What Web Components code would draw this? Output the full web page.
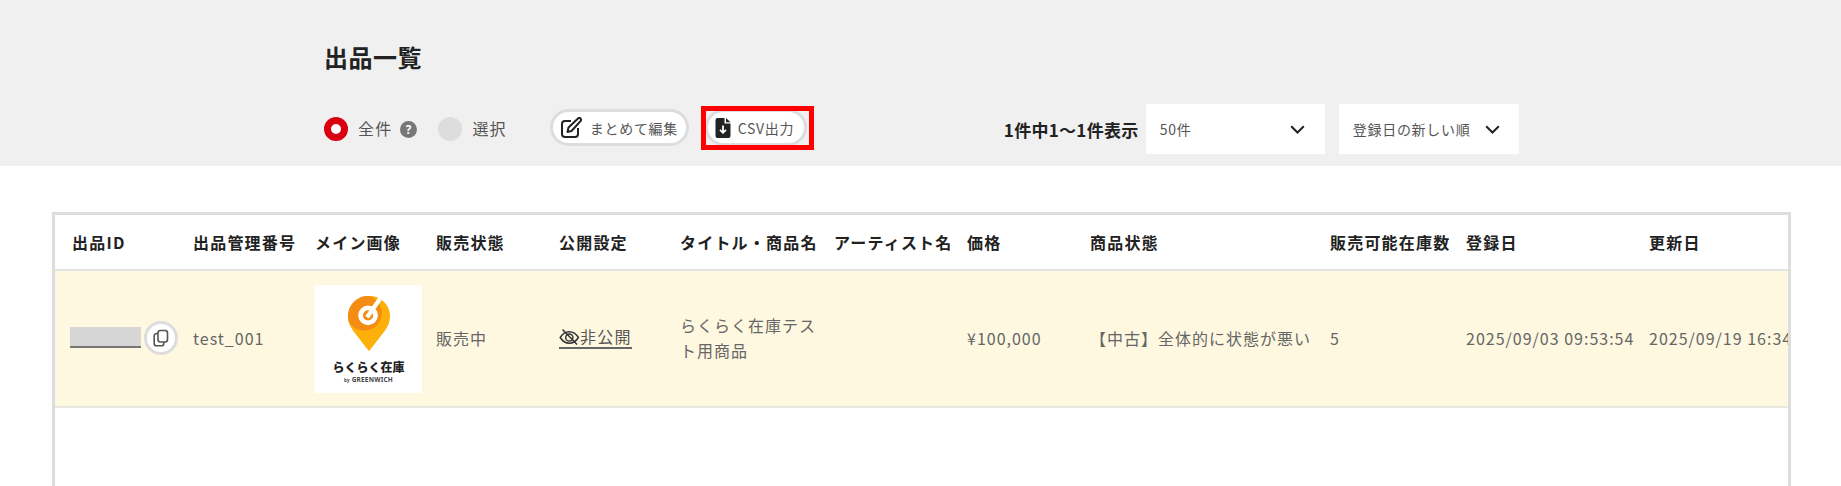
<!DOCTYPE html>
<html lang="ja"><head><meta charset="utf-8"><title>出品一覧</title>
<style>
html,body{margin:0;padding:0;height:486px;overflow:hidden;background:#fff;font-family:"Noto Sans CJK JP","Noto Sans",sans-serif;color:#555}
</style></head><body>
<list-page></list-page>
<script>
const def=(name,css,html)=>{customElements.define(name,class extends HTMLElement{constructor(){super();this.attachShadow({mode:'open'}).innerHTML=`<style>${css}</style>${html}`}})};

def('radio-opt',`:host{display:inline-flex;align-items:center;gap:10px;font-size:16px;letter-spacing:1.2px;color:#555}
 i{display:block;box-sizing:border-box;width:24px;height:24px;border-radius:50%;background:#ddd}
 span{padding-bottom:2px}
 :host([on]) i{background:#fff;border:7px solid #d9000f}`,`<i></i><span><slot></slot></span>`);

def('pill-btn',`:host{display:inline-flex;align-items:center;box-sizing:border-box;height:37px;border:3px solid #ddd;border-radius:19px;background:#fff;font-size:14px;letter-spacing:.7px;color:#555;padding:0 8px;white-space:nowrap;margin-top:-3px}
 ::slotted(svg){display:block;flex:none}`,`<slot name="icon"></slot><slot></slot>`);

def('select-box',`:host{display:flex;align-items:center;justify-content:space-between;box-sizing:border-box;height:50px;width:179px;background:#fff;padding:0 20px 0 14px;font-size:14px;letter-spacing:.7px;color:#555;white-space:nowrap}
 svg{display:block;flex:none}`,`<slot></slot><svg width="15" height="9" viewBox="0 0 15 9" fill="none" stroke="#222" stroke-width="2"><path d="M1.200 1.200 7.500 7.500 13.800 1.200"/></svg>`);

def('data-row',`:host{display:grid;grid-template-columns:121px 122px 121px 123px 121px 154px 133px 123px 240px 136px 183px 200px;box-sizing:border-box;align-items:center;white-space:nowrap;padding-left:17px}
 :host([head]){height:56px;border-bottom:2px solid #e4e4e4;color:#222;font-weight:700;font-size:16px;letter-spacing:1.2px;background:#fff}
 :host([body]){height:137px;padding-bottom:2px;border-bottom:2px solid #e8e8e0;background:#fef8e0;color:#666;font-size:16px;letter-spacing:1px}`,`<slot></slot>`);

def('cell-box',`:host{display:block;min-width:0}`,`<slot></slot>`);

def('copy-id',`:host{display:flex;align-items:center;gap:3px;margin-left:-2px}
 .id{display:block;box-sizing:border-box;width:71px;height:21px;background:#d6d6d6;border-bottom:2px solid #777}
 .b{display:flex;align-items:center;justify-content:center;box-sizing:border-box;width:34px;height:34px;border:3px solid #ddd;border-radius:50%;background:#fff}`,
`<span class="id"></span><span class="b"><svg width="18" height="18" viewBox="0 0 18 18" fill="none" stroke="#555" stroke-width="1.600"><rect x="6" y="1.500" width="9.500" height="11.500" rx="2.400"/><path d="M6 4.500H4.600A2.400 2.400 0 0 0 2.200 7v7.400a2.400 2.400 0 0 0 2.400 2.400h4.800a2.400 2.400 0 0 0 2.400-2.400V13"/></svg></span>`);

def('brand-logo',`:host{display:flex;flex-direction:column;align-items:center;box-sizing:border-box;width:107px;height:108px;background:#fff;padding-top:10px;letter-spacing:0}
 svg{display:block}
 .n{font:900 12px/14px "Noto Sans CJK JP",sans-serif;color:#222;margin-top:8px;letter-spacing:0}
 .s{font:700 6.500px/8px "Noto Sans",sans-serif;color:#444;letter-spacing:.2px;margin-top:2px}
 small{font-size:4.500px}`,
`<svg width="42" height="57" viewBox="0 0 44 58"><defs><clipPath id="p"><path d="M22 0C9.800 0 0 9.600 0 21.600 0 29 3.400 34 8 40l14 18 14-18c4.600-6 8-11 8-18.400C44 9.600 34.200 0 22 0z"/></clipPath></defs>
<g clip-path="url(#p)"><rect width="44" height="58" fill="#fdb00a"/><circle cx="17" cy="18" r="18.500" fill="#f58c14"/>
<circle cx="21" cy="20.500" r="7.800" fill="none" stroke="#fff" stroke-width="5"/><path d="M20 22.500 35 1" stroke="#fff" stroke-width="4.500" fill="none"/></g></svg>
<span class="n">らくらく在庫</span><span class="s"><small>by</small> GREENWICH</span>`);

def('private-link',`:host{display:inline-flex;align-items:center;color:#555;border-bottom:2px solid #666;line-height:21px;letter-spacing:1.200px}
 svg{display:block;flex:none}`,
`<svg width="21" height="18" viewBox="0 0 21 18" fill="none" stroke="#333" stroke-width="1.500"><path d="M1.200 9.500C3.500 5.800 6.700 3.800 10.300 3.800s6.800 2 9.100 5.700c-2.300 3.700-5.500 5.700-9.100 5.700S3.500 13.200 1.200 9.500z"/><circle cx="10.300" cy="9.500" r="3.600"/><path d="M3.500 1.500 18 16.500"/></svg><slot></slot>`);

def('list-page',`:host{display:block;position:relative;height:486px;overflow:hidden}
 .band{box-sizing:border-box;height:166px;background:#f0f0f0;padding:39px 0 0 324px}
 h1{margin:0;font-size:24px;line-height:36px;font-weight:700;color:#222;letter-spacing:.5px}
 .bar{display:flex;align-items:center;height:50px;margin-top:29px}
 .help{display:block;margin-left:8px;margin-right:21px}
 .count{font-size:17px;font-weight:700;color:#222;white-space:nowrap;width:134px;letter-spacing:.3px;margin-left:197px}
 .tbl{box-sizing:border-box;margin:46px 50px 0 52px;height:300px;border:3px solid #ddd;overflow:hidden;background:#fff}
 .flag{position:absolute;box-sizing:border-box;left:701px;top:106px;width:113px;height:44px;border:5px solid #f00;pointer-events:none}`,
`<div class="band"><h1>出品一覧</h1>
 <div class="bar">
  <radio-opt on>全件</radio-opt>
  <svg class="help" width="17" height="17" viewBox="0 0 16 16"><circle cx="8" cy="8" r="8" fill="#777"/><text x="8" y="12" text-anchor="middle" font-size="11" font-weight="700" fill="#fff" font-family="Noto Sans">?</text></svg>
  <radio-opt>選択</radio-opt>
  <pill-btn style="margin-left:43px;width:139px;padding-left:7px"><svg slot="icon" style="margin-right:8px" width="22" height="22" viewBox="0 0 22 22" fill="none" stroke="#222" stroke-width="2"><path d="M11 4H5a3 3 0 0 0-3 3v10a3 3 0 0 0 3 3h10a3 3 0 0 0 3-3v-6"/><path d="M7.500 15l1-4.500L18 1.500a1.800 1.800 0 0 1 2.500 0 1.800 1.800 0 0 1 0 2.600L11.500 14z" stroke-linejoin="round"/></svg>まとめて編集</pill-btn>
  <pill-btn style="margin-left:16px;width:102px;padding-left:7px"><svg slot="icon" style="margin-right:7px" width="16" height="20" viewBox="0 0 15 20"><path d="M2 0h7v5.500h6V18a2 2 0 0 1-2 2H2a2 2 0 0 1-2-2V2a2 2 0 0 1 2-2z" fill="#222"/><path d="M10.500 0 15 4.200h-4.500z" fill="#222"/><path d="M7.500 7.500v7M4.500 11.800l3 3 3-3" fill="none" stroke="#fff" stroke-width="1.800"/></svg>CSV出力</pill-btn>
  <span class="count">1件中1〜1件表示</span>
  <select-box style="margin-left:8px">50件</select-box>
  <select-box style="margin-left:14px;padding-right:19px;width:180px">登録日の新しい順</select-box>
 </div></div>
 <div class="tbl">
  <data-row head><cell-box>出品ID</cell-box><cell-box>出品管理番号</cell-box><cell-box>メイン画像</cell-box><cell-box>販売状態</cell-box><cell-box>公開設定</cell-box><cell-box>タイトル・商品名</cell-box><cell-box>アーティスト名</cell-box><cell-box>価格</cell-box><cell-box>商品状態</cell-box><cell-box>販売可能在庫数</cell-box><cell-box>登録日</cell-box><cell-box>更新日</cell-box></data-row>
  <data-row body><cell-box><copy-id></copy-id></cell-box><cell-box>test_001</cell-box><cell-box style="padding-top:2px"><brand-logo></brand-logo></cell-box><cell-box>販売中</cell-box><cell-box style="padding-top:2px"><private-link>非公開</private-link></cell-box><cell-box style="white-space:normal;width:140px;line-height:25px">らくらく在庫テスト用商品</cell-box><cell-box></cell-box><cell-box>¥100,000</cell-box><cell-box>【中古】全体的に状態が悪い</cell-box><cell-box>5</cell-box><cell-box>2025/09/03 09:53:54</cell-box><cell-box>2025/09/19 16:34:12</cell-box></data-row>
 </div>
 <div class="flag"></div>`);
</script>
</body></html>
